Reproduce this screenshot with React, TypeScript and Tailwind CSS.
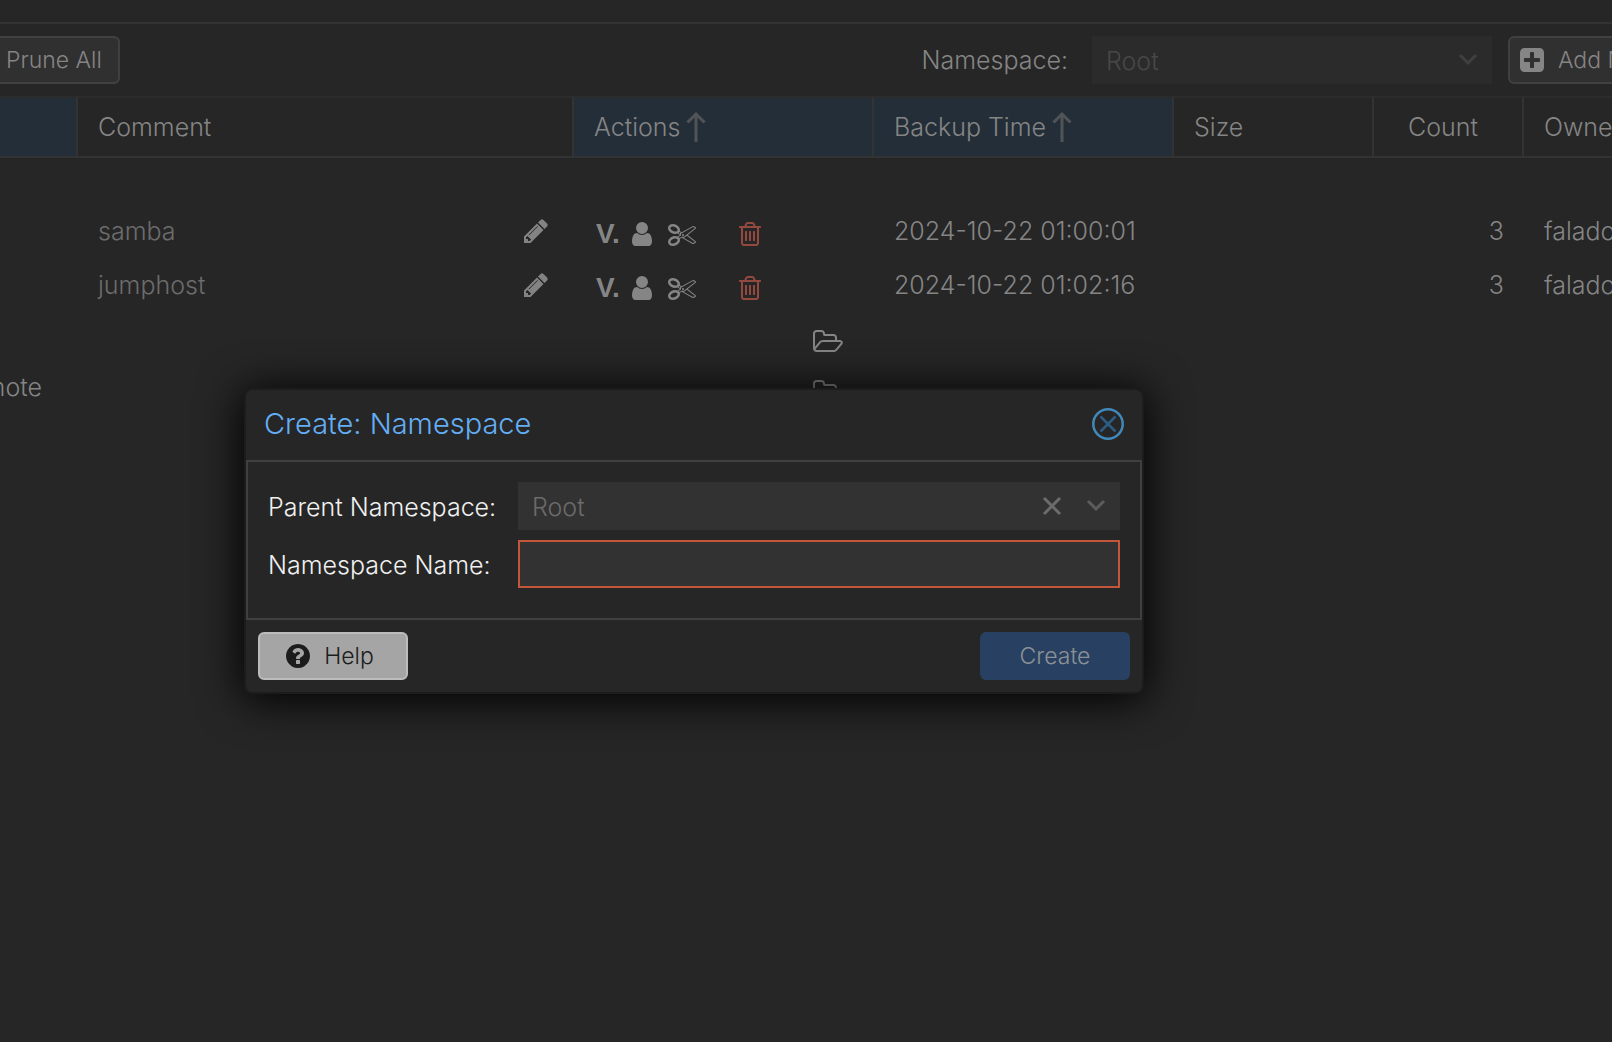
import React from 'react';

type IconProps = { d: string; wide?: boolean; className?: string };

const PENCIL = 'M491 1536l91-91-235-235-91 91v107h128v128h107zm523-928q0-22-22-22-10 0-17 7l-542 542q-7 7-7 17 0 22 22 22 10 0 17-7l542-542q7-7 7-17zm-54-192l416 416-832 832h-416v-416zm683 96q0 53-37 90l-166 166-416-416 166-165q36-38 90-38 53 0 91 38l235 234q37 39 37 91z';
const USER = 'M1536 1399q0 109-62.5 187t-150.5 78h-854q-88 0-150.5-78t-62.5-187q0-85 8.5-160.5t31.5-152 58.5-131 94-89 134.5-34.5q131 128 313 128t313-128q76 0 134.5 34.5t94 89 58.5 131 31.5 152 8.5 160.5zm-256-887q0 159-112.5 271.5t-271.5 112.5-271.5-112.5-112.5-271.5 112.5-271.5 271.5-112.5 271.5 112.5 112.5 271.5z';
const SCISSORS = 'M960 896q26 0 45 19t19 45-19 45-45 19-45-19-19-45 19-45 45-19zm300 64l507 398q28 20 25 56-5 35-35 51l-128 64q-13 7-29 7-17 0-31-8l-690-387-110 66q-8 4-12 5 14 49 10 97-7 77-56 147.5t-132 123.5q-132 84-277 84-136 0-222-78-90-84-79-207 7-76 56-147t131-124q132-84 278-84 83 0 151 31 9-13 22-22l122-73-122-73q-13-9-22-22-68 31-151 31-146 0-278-84-82-53-131-124t-56-147q-5-59 15.5-113t63.5-93q85-79 222-79 145 0 277 84 83 52 132 123t56 148q4 48-10 97 4 1 12 5l110 66 690-387q14-8 31-8 16 0 29 7l128 64q30 16 35 51 3 36-25 56zm-681-260q46-42 21-108t-106-117q-92-59-192-59-74 0-113 36-46 42-21 108t106 117q92 59 192 59 74 0 113-36zm-85 745q81-51 106-117t-21-108q-39-36-113-36-100 0-192 59-81 51-106 117t21 108q39 36 113 36 100 0 192-59zm178-613l96 58v-11q0-36 33-56l14-8-79-44-26 26q-3 3-10 11t-12 12q-2 2-4 3.5t-3 2.5zm224 224l96 32 736-576-128-64-768 431v113l-160 96 9 8q2 2 7 6 4 4 11 12t11 12l26 26zm704 416l128-64-520-408-177 138q-2 3-13 7z';
const TRASH = 'M704 736v576q0 14-9 23t-23 9h-64q-14 0-23-9t-9-23v-576q0-14 9-23t23-9h64q14 0 23 9t9 23zm256 0v576q0 14-9 23t-23 9h-64q-14 0-23-9t-9-23v-576q0-14 9-23t23-9h64q14 0 23 9t9 23zm256 0v576q0 14-9 23t-23 9h-64q-14 0-23-9t-9-23v-576q0-14 9-23t23-9h64q14 0 23 9t9 23zm128 724v-948h-896v948q0 22 7 40.5t14.5 27 10.5 8.5h832q3 0 10.5-8.5t14.5-27 7-40.5zm-672-1076h448l-48-117q-7-9-17-11h-317q-10 2-17 11zm928 32v64q0 14-9 23t-23 9h-96v948q0 83-47 143.5t-113 60.5h-832q-66 0-113-58.5t-47-141.5v-952h-96q-14 0-23-9t-9-23v-64q0-14 9-23t23-9h309l70-167q15-37 54-63t79-26h320q40 0 79 26t54 63l70 167h309q14 0 23 9t9 23z';
const FOLDER = 'M1845 931q0-35-53-35h-1088q-40 0-85.5 21.5t-71.5 52.5l-294 363q-18 24-18 40 0 35 53 35h1088q40 0 86-22t71-53l294-363q18-22 18-39zm-1141-163h768v-160q0-40-28-68t-68-28h-576q-40 0-68-28t-28-68v-64q0-40-28-68t-68-28h-320q-40 0-68 28t-28 68v853l256-315q44-53 116-87.5t140-34.5zm1269 163q0 62-46 120l-295 363q-43 53-116 87.5t-140 34.5h-1088q-92 0-158-66t-66-158v-960q0-92 66-158t158-66h320q92 0 158 66t66 158v32h544q92 0 158 66t66 158v160h192q54 0 99 24.5t67 70.5q15 32 15 68z';
const PLUS_SQUARE = 'M1408 960v-128q0-26-19-45t-45-19h-320v-320q0-26-19-45t-45-19h-128q-26 0-45 19t-19 45v320h-320q-26 0-45 19t-19 45v128q0 26 19 45t45 19h320v320q0 26 19 45t45 19h128q26 0 45-19t19-45v-320h320q26 0 45-19t19-45zm256-544v960q0 119-84.5 203.5t-203.5 84.5h-960q-119 0-203.5-84.5t-84.5-203.5v-960q0-119 84.5-203.5t203.5-84.5h960q119 0 203.5 84.5t84.5 203.5z';
const QUESTION = 'M1024 1376v-192q0-14-9-23t-23-9h-192q-14 0-23 9t-9 23v192q0 14 9 23t23 9h192q14 0 23-9t9-23zm256-672q0-88-55.5-163t-138.5-116-170-41q-243 0-371 213-15 24 8 42l132 100q7 6 19 6 16 0 25-12 53-68 86-92 34-24 86-24 48 0 85.5 26t37.5 59q0 38-20 61t-68 45q-63 28-115.5 86.5t-52.5 125.5v36q0 14 9 23t23 9h192q14 0 23-9t9-23q0-19 21.5-49.5t54.5-49.5q32-18 49-28.5t46-35 44.5-48 28-60.5 12.5-81zm384 192q0 209-103 385.5t-279.5 279.5-385.5 103-385.5-103-279.5-279.5-103-385.5 103-385.5 279.5-279.5 385.5-103 385.5 103 279.5 279.5 103 385.5z';

const Icon = ({ d, wide, className = '' }: IconProps) => (
  <svg
    viewBox={wide ? '0 0 2048 1792' : '0 0 1792 1792'}
    className={`${wide ? 'w-8' : 'w-7'} h-7 shrink-0 fill-current ${className}`}
    aria-hidden="true"
  >
    <path d={d} />
  </svg>
);

const Chevron = ({ className = '' }: { className?: string }) => (
  <svg viewBox="0 0 20 14" className={`w-5 h-3.5 shrink-0 ${className}`} fill="none" stroke="currentColor" strokeWidth="3" aria-hidden="true">
    <path d="M2 2l8 8 8-8" />
  </svg>
);

const SortArrow = () => (
  <svg viewBox="0 0 20 32" className="w-5 h-8 shrink-0 text-[#515457]" fill="none" stroke="currentColor" strokeWidth="3" aria-hidden="true">
    <path d="M10 31V2M1.500 11.500L10 3l8.500 8.500" />
  </svg>
);

const COLUMNS = [
  { label: '', width: 'w-[78px]', sorted: true, arrow: false },
  { label: 'Comment', width: 'w-[496px]', sorted: false, arrow: false },
  { label: 'Actions', width: 'w-[300px]', sorted: true, arrow: true },
  { label: 'Backup Time', width: 'w-[300px]', sorted: true, arrow: true },
  { label: 'Size', width: 'w-[200px]', sorted: false, arrow: false },
  { label: 'Count', width: 'w-[150px]', sorted: false, arrow: false },
  { label: 'Owner', width: '', sorted: false, arrow: false },
];

const GROUPS = [
  { comment: 'samba', time: '2024-10-22 01:00:01', count: 3, owner: 'falado@pbs' },
  { comment: 'jumphost', time: '2024-10-22 01:02:16', count: 3, owner: 'falado@pbs' },
];

const NAMESPACES = ['', 'remote'];

const Toolbar = () => (
  <div className="flex items-center h-[74px] border-t-2 border-[#333333] overflow-hidden">
    <button type="button" className="h-12 pl-1.5 pr-4 shrink-0 rounded-r-md border-2 border-l-0 border-[#404040] bg-[#303030] text-[23px]">
      Prune All
    </button>
    <div className="flex-1" />
    <label htmlFor="namespace" className="shrink-0 mr-6">Namespace:</label>
    <div className="flex items-center w-[400px] h-12 shrink-0 bg-[#2b2b2b] pr-3.5 mr-4 text-[#484848]">
      <select id="namespace" className="flex-1 h-full pl-3.5 pt-0.5 appearance-none bg-transparent outline-none">
        <option>Root</option>
      </select>
      <Chevron className="text-[#404040]" />
    </div>
    <div className="w-[104px] shrink-0">
      <button type="button" className="flex items-center gap-3 h-12 px-2 rounded-md border-2 border-[#404040] bg-[#303030] text-[23px] whitespace-nowrap">
        <Icon d={PLUS_SQUARE} />
        Add NS
      </button>
    </div>
  </div>
);

const ContentTable = () => (
  <table className="w-full table-fixed border-separate border-spacing-0 text-left">
    <thead>
      <tr>
        {COLUMNS.map((col) => (
          <th
            key={col.label}
            scope="col"
            className={`${col.width} h-[62px] p-0 pl-5 font-light border-t-2 border-b-2 border-r-2 border-[#333333] border-t-[#2c2c2c] last:border-r-0 ${col.sorted ? 'bg-[#242e38]' : ''}`}
          >
            <div className={`flex items-center gap-1.5 whitespace-nowrap ${col.label === 'Count' ? 'justify-end pr-11' : ''}`}>
              {col.label}
              {col.arrow && <SortArrow />}
            </div>
          </th>
        ))}
      </tr>
    </thead>
    <tbody>
      <tr className="h-12">
        <td colSpan={7} />
      </tr>
      {GROUPS.map((group) => (
        <tr key={group.comment} className="h-[54px]">
          <td />
          <td className="p-0 pl-5 pb-1 text-[#6c6c6c]">
            <div className="flex items-center justify-between pr-6">
              {group.comment}
              <button type="button" aria-label="Edit comment" className="text-[#838383]">
                <Icon d={PENCIL} />
              </button>
            </div>
          </td>
          <td className="p-0 pl-[22px] pt-0.5">
            <div className="flex items-center">
              <button type="button" aria-label="Verify" className="w-8 text-left font-['Liberation_Sans'] font-bold text-[28px] leading-7">V.</button>
              <button type="button" aria-label="Change owner"><Icon d={USER} /></button>
              <button type="button" aria-label="Prune" className="ml-3"><Icon d={SCISSORS} /></button>
              <button type="button" aria-label="Forget" className="ml-10 text-[#94493f]"><Icon d={TRASH} /></button>
            </div>
          </td>
          <td className="p-0 pl-5 pb-1">{group.time}</td>
          <td />
          <td className="p-0 pr-5 pb-1 text-right">{group.count}</td>
          <td className="p-0 pl-5 pb-1">{group.owner}</td>
        </tr>
      ))}
      {NAMESPACES.map((name) => (
        <tr key={name} className="h-[50px]">
          <td className="p-0 pb-1">
            <div className="flex justify-end pr-9">{name}</div>
          </td>
          <td />
          <td className="p-0 pr-[30px] pt-1.5">
            <button type="button" aria-label="Open namespace" className="block ml-auto">
              <Icon d={FOLDER} wide />
            </button>
          </td>
          <td colSpan={4} />
        </tr>
      ))}
    </tbody>
  </table>
);

const CreateDialog = () => (
  <form
    role="dialog"
    aria-labelledby="dialog-title"
    className="absolute left-[244px] top-[388px] w-[900px] rounded-lg border-2 border-[#1c1c1c] bg-[#262626] shadow-[0_4px_44px_2px_#000000]"
  >
    <div className="flex items-center justify-between h-[70px] px-[18px] pb-0.5">
      <h2 id="dialog-title" className="text-[29px] font-light text-[#64aef5]">Create: Namespace</h2>
      <button type="button" aria-label="Close" className="text-[#4189b8]">
        <svg viewBox="0 0 32 32" className="w-8 h-8" fill="none" stroke="currentColor" strokeWidth="2.500" aria-hidden="true">
          <circle cx="16" cy="16" r="14.700" />
          <path className="text-[#2d5c87]" stroke="currentColor" d="M8.500 8.500l15 15M23.500 8.500l-15 15" />
        </svg>
      </button>
    </div>

    <div className="flex flex-col gap-2.5 border-2 border-[#404040] px-5 pt-5 pb-[30px] text-[#f0f0f0]">
      <div className="flex items-center">
        <label htmlFor="parent" className="w-[250px] shrink-0 pt-0.5">Parent Namespace:</label>
        <div className="flex items-center flex-1 h-12 pr-3.5 bg-[#323232] text-[#6b6b6b]">
          <select id="parent" className="flex-1 h-full pl-3.5 pt-0.5 appearance-none bg-transparent outline-none">
            <option>Root</option>
          </select>
          <button type="button" aria-label="Clear" className="mr-6">
            <svg viewBox="0 0 20 20" className="w-5 h-5" fill="none" stroke="currentColor" strokeWidth="3" aria-hidden="true">
              <path d="M2 2l16 16M18 2L2 18" />
            </svg>
          </button>
          <Chevron className="text-[#5c5c5c]" />
        </div>
      </div>
      <div className="flex items-center">
        <label htmlFor="name" className="w-[250px] shrink-0 pt-0.5">Namespace Name:</label>
        <input id="name" type="text" className="flex-1 h-12 px-3 border-2 border-[#c2553a] bg-[#323232] outline-none" />
      </div>
    </div>

    <div className="flex justify-between px-3 py-3 text-[23px]">
      <button type="button" className="flex items-center justify-center gap-3 w-[150px] h-12 pr-2 rounded-md border-2 border-[#bcbcbc] bg-[#a5a5a5] text-[#1c1c1c]">
        <Icon d={QUESTION} />
        Help
      </button>
      <button type="submit" className="w-[150px] h-12 rounded-md bg-[#284162] text-[#8d9196]">
        Create
      </button>
    </div>
  </form>
);

const App: React.FC = () => {
  return (
    <div className="relative min-h-screen overflow-hidden bg-[#262626] pt-[22px] font-[Inter,'Liberation_Sans',sans-serif] font-light text-[25px] leading-8 text-[#858585]">
      <Toolbar />
      <ContentTable />
      <CreateDialog />
    </div>
  );
};

export default App;
